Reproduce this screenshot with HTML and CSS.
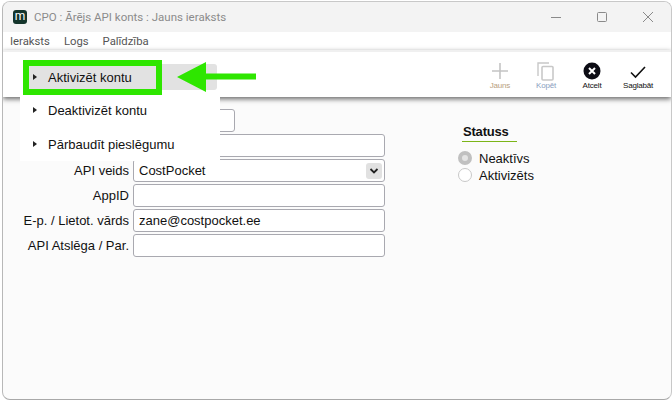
FILE: index.html
```html
<!DOCTYPE html>
<html lang="lv">
<head>
<meta charset="utf-8">
<title>CPO : Ārējs API konts : Jauns ieraksts</title>
<link rel="stylesheet" href="styles.css">
</head>
<body>
<div class="window">
  <header class="titlebar">
    <span class="app-icon">m</span>
    <span class="title">CPO : Ārējs API konts : Jauns ieraksts</span>
    <div class="controls">
      <svg width="12" height="12" viewBox="0 0 12 12"><path d="M1 6.500h10" stroke="#8a8a8a" fill="none"/></svg>
      <svg width="12" height="12" viewBox="0 0 12 12"><rect x="1.500" y="1.500" width="9" height="9" rx="1" stroke="#8a8a8a" fill="none"/></svg>
      <svg width="12" height="12" viewBox="0 0 12 12"><path d="M1 1l10 10M11 1L1 11" stroke="#8a8a8a" fill="none"/></svg>
    </div>
  </header>
  <nav class="menubar">
    <span>Ieraksts</span><span>Logs</span><span>Palīdzība</span>
  </nav>
  <div class="toolbar">
    <div class="tool muted">
      <svg width="18" height="18" viewBox="0 0 18 18"><path d="M9 1v16M1 9h16" stroke="#c4c4c4" stroke-width="1.600" fill="none"/></svg>
      <span class="orange">Jauns</span>
    </div>
    <div class="tool muted">
      <svg width="18" height="19" viewBox="0 0 18 19"><path d="M1 14V1h11" stroke="#c8c8c8" stroke-width="1.400" fill="none"/><rect x="5" y="4.500" width="11" height="13.500" rx="1" stroke="#c8c8c8" stroke-width="1.600" fill="none"/></svg>
      <span class="blue">Kopēt</span>
    </div>
    <div class="tool">
      <svg width="18" height="18" viewBox="0 0 18 18"><circle cx="9" cy="9" r="8.500" fill="#0c0c14"/><path d="M6 6l6 6M12 6l-6 6" stroke="#fff" stroke-width="2" fill="none"/></svg>
      <span>Atcelt</span>
    </div>
    <div class="tool">
      <svg width="18" height="18" viewBox="0 0 18 18"><path d="M2 10.500l4.500 4.500 9.500-10" stroke="#111" stroke-width="1.600" fill="none"/></svg>
      <span>Saglabāt</span>
    </div>
  </div>
  <main class="content">
    <form class="form">
      <div class="row"><label></label><input class="short" type="text"></div>
      <div class="row"><label></label><input type="text"></div>
      <div class="row"><label>API veids</label>
        <div class="select"><span>CostPocket</span><span class="chev"><svg width="10" height="8" viewBox="0 0 10 8"><path d="M1.500 2l3.500 3.500L8.500 2" stroke="#222" stroke-width="1.800" fill="none"/></svg></span></div>
      </div>
      <div class="row"><label>AppID</label><input type="text"></div>
      <div class="row"><label>E-p. / Lietot. vārds</label><input type="text" value="zane@costpocket.ee"></div>
      <div class="row"><label>API Atslēga / Par.</label><input type="text"></div>
    </form>
    <section class="status">
      <h2>Statuss</h2>
      <div class="radio"><span class="dot on"></span>Neaktīvs</div>
      <div class="radio"><span class="dot"></span>Aktivizēts</div>
    </section>
  </main>

  <div class="menu">
    <div class="item hover"><span class="tri"></span>Aktivizēt kontu</div>
    <div class="item"><span class="tri"></span>Deaktivizēt kontu</div>
    <div class="item"><span class="tri"></span>Pārbaudīt pieslēgumu</div>
  </div>
  <div class="marker"></div>
  <svg class="arrow" width="80" height="32" viewBox="0 0 80 32"><path d="M0 16L29 1v11.500h50v6H29V31z" fill="#2ee600"/></svg>
</div>
</body>
</html>
```
FILE: styles.css
```css
* { box-sizing: border-box; }
html, body { margin: 0; height: 100%; background: #fff; overflow: hidden; }
body { padding: 1px 0 2px 2px; font-family: "Liberation Sans", Arial, sans-serif; }
.window {
  position: relative;
  width: 670px;
  height: 399px;
  display: flex;
  flex-direction: column;
  background: #fbfbfb;
  border-left: 1px solid #b8b8b8;
  border-top: 1px solid #c8c8c8;
  border-right: 1px solid #c8c8c8;
  border-bottom: 1px solid #a8a8a8;
  border-radius: 8px;
  overflow: hidden;
}
.titlebar {
  height: 30px;
  flex: none;
  display: flex;
  align-items: center;
  padding-left: 10px;
  background: #f3f3f3;
}
.app-icon {
  width: 14px;
  height: 14px;
  border-radius: 3px;
  background: #14352c;
  color: #fff;
  font-family: Roboto, "Liberation Sans", sans-serif;
  font-size: 12px;
  line-height: 12px;
  text-align: center;
  margin-right: 7px;
}
.title { font-family: Roboto, "Liberation Sans", sans-serif; font-size: 11.500px; color: #8b8b8b; }
.controls {
  margin-left: auto;
  display: flex;
  gap: 34px;
  padding-right: 17px;
  align-items: center;
}
.menubar {
  height: 18px;
  flex: none;
  display: flex;
  gap: 14px;
  align-items: center;
  padding-left: 7px;
  background: #fff;
  font-family: Roboto, "Liberation Sans", sans-serif;
  font-size: 11.300px;
  color: #555;
}
.toolbar {
  height: 47px;
  flex: none;
  display: flex;
  justify-content: flex-end;
  align-items: flex-start;
  background: #fff;
  border-top: 2px solid #f0f0f0;
  box-shadow: 0 2px 5px rgba(0,0,0,.6);
  padding: 10px 10px 0 0;
  position: relative;
}
.tool {
  width: 46px;
  display: flex;
  flex-direction: column;
  align-items: center;
  font-size: 8px;
  color: #111;
  height: 28px;
  justify-content: space-between;
  letter-spacing: -.2px;
}
.tool.muted { color: #aaa; }
.orange { color: #b8a080; }
.blue { color: #8aa0c0; }
.content {
  flex: 1;
  display: flex;
  padding-top: 12px;
}
.form {
  width: 383px;
  display: flex;
  flex-direction: column;
  gap: 2px;
}
.row {
  display: flex;
  align-items: center;
  gap: 4px;
  height: 23px;
}
.row label {
  width: 126px;
  text-align: right;
  font-size: 13px;
  color: #111;
}
.row input, .select {
  width: 252px;
  height: 23px;
  border: 1px solid #a9a9b0;
  border-radius: 3px;
  background: #fff;
  font: 13px "Liberation Sans", Arial, sans-serif;
  color: #111;
  padding: 0 5px;
  outline: none;
}
.row input.short { width: 102px; }
.select {
  display: flex;
  align-items: center;
  justify-content: space-between;
  padding-right: 2px;
}
.chev {
  width: 16px;
  height: 16px;
  border-radius: 3px;
  background: #e1e1e1;
  display: flex;
  align-items: center;
  justify-content: center;
}
.status { margin: 15px 0 0 76px; }
.status h2 {
  margin: 0 0 8px;
  width: 55px;
  padding: 0 0 2px 1px;
  font-size: 13px;
  letter-spacing: -.2px;
  line-height: 15px;
  font-weight: 700;
  color: #111;
  border-bottom: 1px solid #7cb518;
}
.radio {
  display: flex;
  align-items: center;
  height: 17px;
  margin-left: -4px;
  font-size: 13px;
  color: #111;
}
.dot {
  width: 14px;
  height: 14px;
  border-radius: 50%;
  border: 1px solid #c8c8c8;
  background: #fff;
  margin: 0 7px 2px 0;
}
.dot.on { border: 4px solid #c0c0c0; background: #e4e4e4; }
.menu {
  position: absolute;
  left: 17px;
  top: 59px;
  width: 200px;
  height: 100px;
  background: #fff;
  font-size: 13px;
  color: #111;
  padding: 2px 3px 0;
}
.item {
  height: 34px;
  display: flex;
  align-items: center;
  padding: 0 0 0 10px;
  border-radius: 3px;
}
.item.hover { height: 26px; margin: 1px 0 3px; background: #e2e2e2; }
.tri {
  width: 0;
  height: 0;
  border-left: 4px solid #222;
  border-top: 3px solid transparent;
  border-bottom: 3px solid transparent;
  margin-right: 11px;
}
.marker {
  position: absolute;
  left: 20px;
  top: 58px;
  width: 139px;
  height: 35px;
  border: 6px solid #2ee600;
}
.arrow { position: absolute; left: 174px; top: 59px; }
```
